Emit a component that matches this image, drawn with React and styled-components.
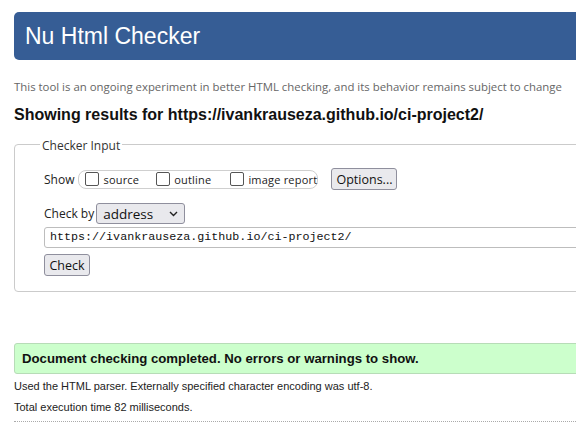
import styled, { createGlobalStyle } from "styled-components";

const GlobalStyle = createGlobalStyle`
  html, body {
    margin: 0;
    padding: 0;
    background: #fff;
    overflow: hidden;
  }
  body {
    font-family: "Liberation Sans", Arial, sans-serif;
    color: #222;
  }
`;

const Page = styled.div`
  width: 640px;
  padding: 12px 0 0 14px;
`;

const Header = styled.h1`
  margin: 0;
  height: 48px;
  background: #365d95;
  border-radius: 5px;
  color: #fff;
  font-family: "Liberation Sans", Arial, sans-serif;
  font-weight: normal;
  font-size: 23px;
  line-height: 48px;
  padding-left: 11px;
`;

const Intro = styled.p`
  margin: 20px 0 0;
  font-family: "Open Sans", sans-serif;
  font-size: 11.4px;
  color: #666;
  line-height: 14px;
`;

const ResultsFor = styled.h2`
  margin: 11px 0 0;
  font-size: 16px;
  font-weight: bold;
  color: #111;
  line-height: 19px;
`;

const Fieldset = styled.fieldset`
  margin: 11px 0 0;
  padding: 11px 0 15px 29px;
  border: 1px solid #cbcbcb;
  border-radius: 4px;
  font-family: "Open Sans", sans-serif;
  font-size: 12px;
  color: #222;
`;

const Legend = styled.legend`
  margin-left: -4px;
  padding: 4px 2px 0;
  font-size: 12px;
  line-height: 14px;
  color: #333;
`;

const Row = styled.div`
  display: flex;
  align-items: center;
  gap: ${(p) => p.gap || 4}px;
  margin-top: ${(p) => p.top || 0}px;
  white-space: nowrap;
`;

const Pill = styled.div`
  display: flex;
  align-items: center;
  height: 17px;
  border: 1px solid #cfcfcf;
  border-radius: 8px;
  padding: 0 6px;
  width: 226px;
  flex-shrink: 0;
`;

const Option = styled.label`
  display: flex;
  align-items: center;
  gap: 4px;
  flex-shrink: 0;
  white-space: nowrap;
  font-size: 11px;
  letter-spacing: 0.2px;
  margin-right: ${(p) => p.gap || 0}px;
`;

const Box = styled.span`
  display: inline-block;
  width: 12px;
  height: 12px;
  border: 1px solid #555;
  border-radius: 2px;
  background: #fff;
`;

const Button = styled.button`
  font-family: "Open Sans", sans-serif;
  font-size: 12.5px;
  color: #111;
  background: #e9e9ed;
  border: 1px solid #8f8f9d;
  border-radius: 3px;
  height: 22px;
  padding: 0 4px;
  white-space: nowrap;
`;

const OptionsButton = styled(Button)`
  margin-left: 9px;
  width: 66px;
  flex-shrink: 0;
`;

const Select = styled.div`
  display: flex;
  align-items: center;
  justify-content: space-between;
  width: 75px;
  height: 19px;
  padding: 0 6px;
  border: 1px solid #8f8f9d;
  border-radius: 3px;
  background: #e9e9ed;
  font-size: 13.5px;
  color: #111;
`;

const UrlInput = styled.div`
  height: 19px;
  margin-top: 3px;
  border: 1px solid #bdbdbd;
  border-radius: 3px;
  font-family: "Liberation Mono", monospace;
  font-size: 11.7px;
  line-height: 19px;
  padding-left: 5px;
  color: #111;
`;

const CheckButton = styled(Button)`
  margin-top: 6px;
  display: block;
  width: 46px;
`;

const Success = styled.div`
  margin-top: 51px;
  height: 29px;
  background: #ccffcc;
  border: 1px solid #b7dcb7;
  border-radius: 3px;
  padding-left: 7px;
  font-weight: bold;
  font-size: 13.2px;
  line-height: 29px;
  color: #111;
`;

const Info = styled.p`
  margin: ${(p) => p.top || 0}px 0 0;
  font-size: 11px;
  line-height: 15px;
  color: #222;
`;

const Rule = styled.hr`
  margin: 6px 0 0;
  border: 0;
  border-top: 1px dotted #aaa;
`;

function Chevron() {
  return (
    <svg width="9" height="6" viewBox="0 0 9 6">
      <path d="M1 1l3.5 3.5L8 1" fill="none" stroke="#222" strokeWidth="1.4" />
    </svg>
  );
}

export default function App() {
  return (
    <>
      <GlobalStyle />
      <Page>
        <Header>Nu Html Checker</Header>
        <Intro>
          This tool is an ongoing experiment in better HTML checking, and its
          behavior remains subject to change
        </Intro>
        <ResultsFor>
          Showing results for https://ivankrauseza.github.io/ci-project2/
        </ResultsFor>
        <Fieldset>
          <Legend>Checker Input</Legend>
          <Row gap={4} top={4}>
            <span>Show</span>
            <Pill>
              <Option gap={17}>
                <Box />
                source
              </Option>
              <Option gap={19}>
                <Box />
                outline
              </Option>
              <Option>
                <Box />
                image report
              </Option>
            </Pill>
            <OptionsButton>Options...</OptionsButton>
          </Row>
          <Row gap={2} top={13}>
            <span>Check by</span>
            <Select>
              address
              <Chevron />
            </Select>
          </Row>
          <UrlInput>https://ivankrauseza.github.io/ci-project2/</UrlInput>
          <CheckButton>Check</CheckButton>
        </Fieldset>
        <Success>Document checking completed. No errors or warnings to show.</Success>
        <Info top={5}>
          Used the HTML parser. Externally specified character encoding was utf-8.
        </Info>
        <Info top={6}>Total execution time 82 milliseconds.</Info>
        <Rule />
      </Page>
    </>
  );
}
